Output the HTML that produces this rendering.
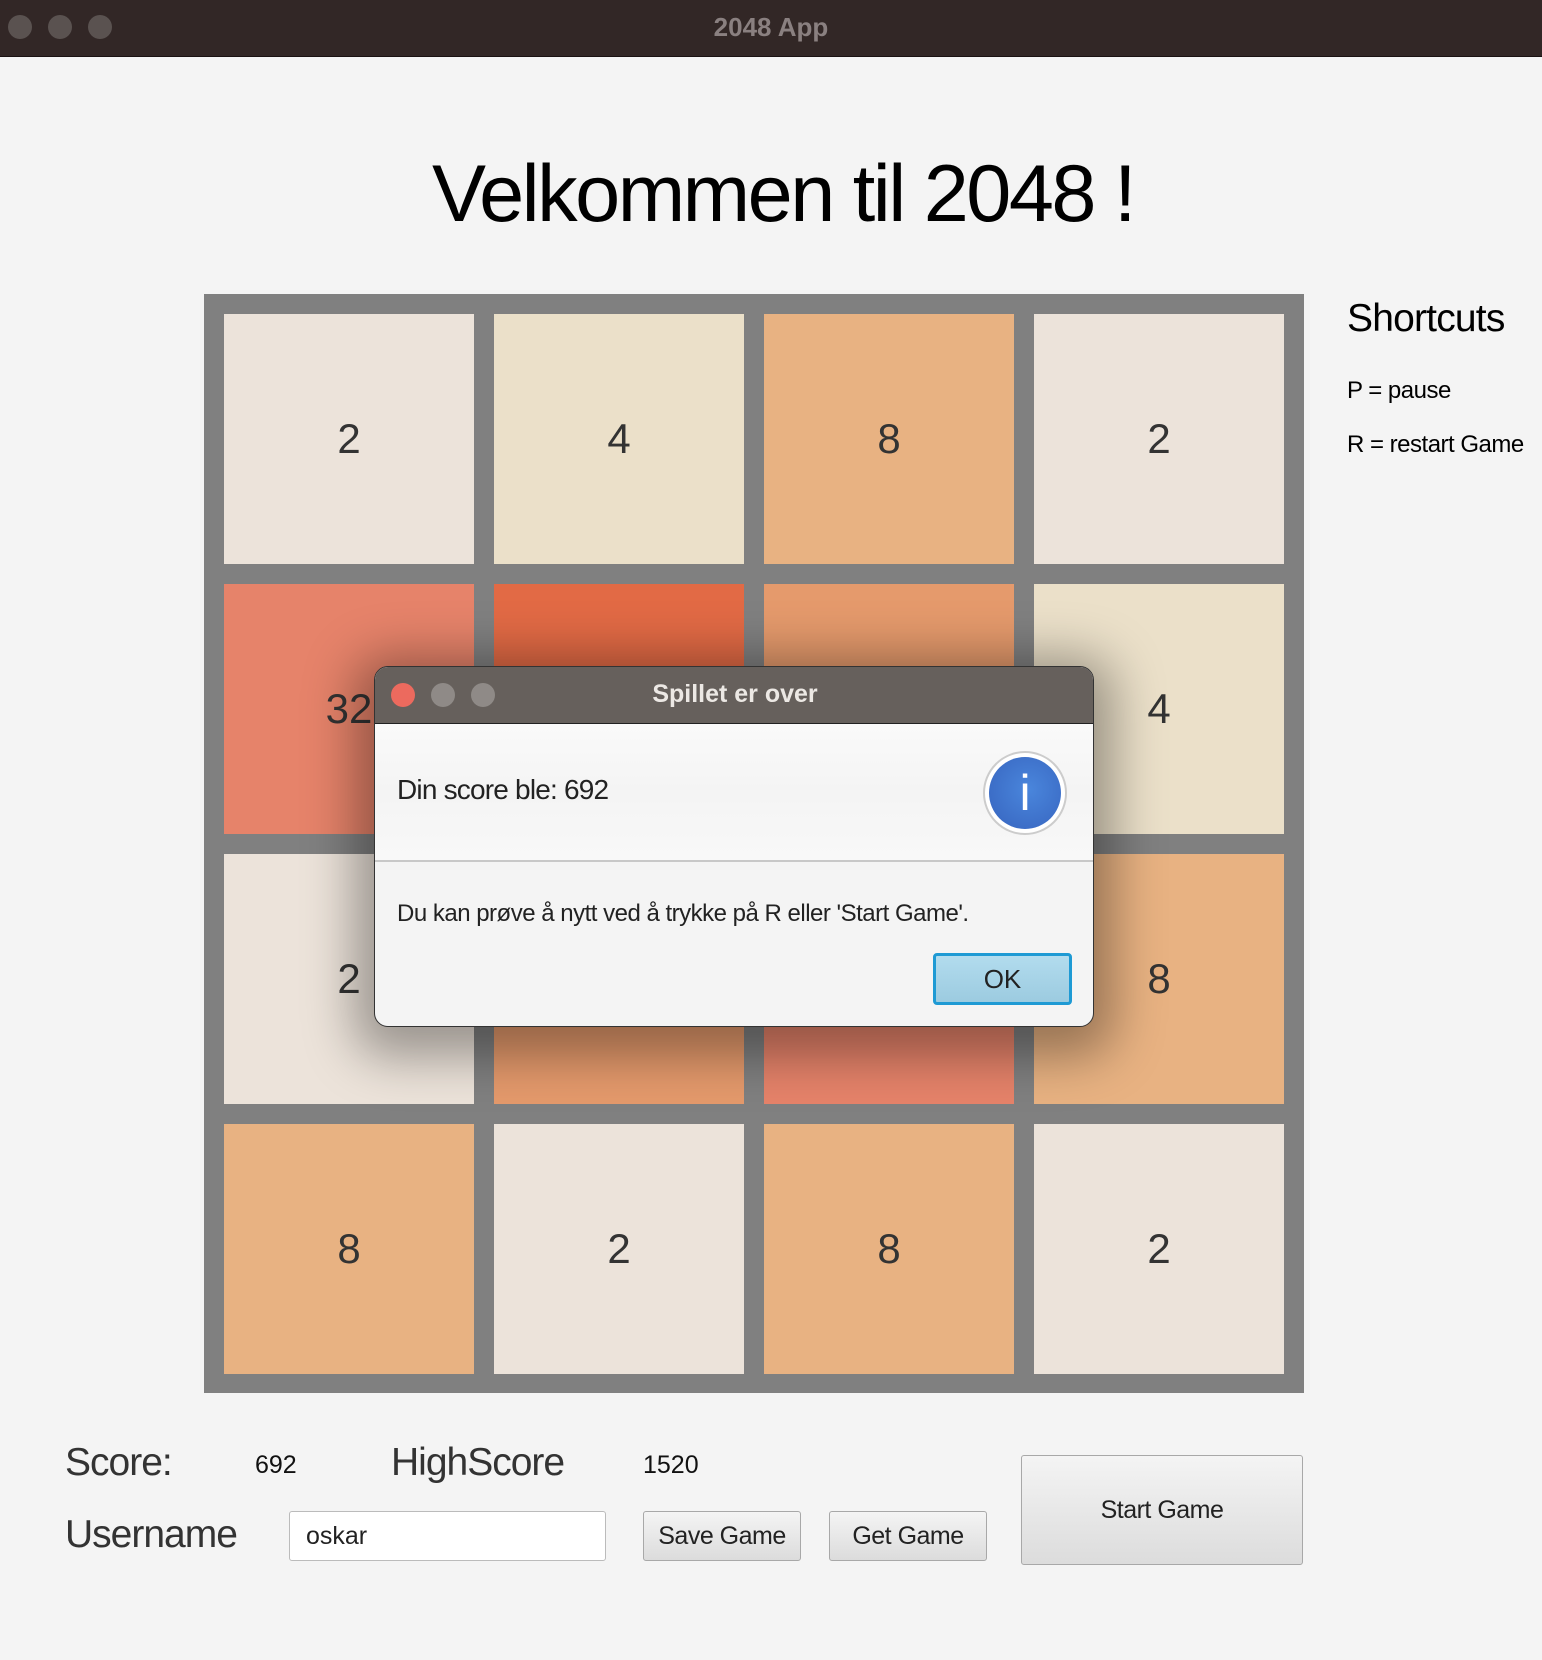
<!DOCTYPE html>
<html><head><meta charset="utf-8"><style>
*{margin:0;padding:0;box-sizing:border-box}
body{width:1542px;height:1660px;background:#f4f4f4;font-family:"Liberation Sans",sans-serif;position:relative;overflow:hidden;color:#1a1a1a}
.abs{position:absolute}
.tb{left:0;top:0;width:1542px;height:57px;background:#322726;border-bottom:1px solid #1a1212}
.dot{width:24px;height:24px;border-radius:50%;background:#5a5250;top:15px}
.tbt{left:0;width:1542px;top:12px;text-align:center;color:#8a8080;font-weight:bold;font-size:26px}
.h1{left:0;width:1566px;text-align:center;top:148px;font-size:81px;letter-spacing:-2.5px;color:#000}
.board{left:204px;top:294px;width:1100px;height:1099px;background:#808080}
.t{position:absolute;width:250px;height:250px;display:flex;align-items:center;justify-content:center;font-size:42px;color:#333}
.sc{left:1347px;font-size:24px;color:#000;letter-spacing:-0.5px}
.dlg{left:374px;top:666px;width:720px;height:361px;border-radius:14px;background:#f4f4f4;border:1px solid #333;overflow:hidden;box-shadow:0 10px 50px 20px rgba(0,0,0,0.35)}
.btn{border:1px solid #a8a8a8;background:linear-gradient(#f4f4f4,#dcdcdc);border-radius:3px;display:flex;align-items:center;justify-content:center;font-size:25px;color:#222;letter-spacing:-0.5px}
.lbl{font-size:39px;color:#333;letter-spacing:-1px}
</style></head><body>
<div class="abs tb"></div>
<div class="abs dot" style="left:8px"></div>
<div class="abs dot" style="left:48px"></div>
<div class="abs dot" style="left:88px"></div>
<div class="abs tbt">2048 App</div>
<div class="abs h1">Velkommen til 2048 !</div>
<div class="abs board">
<div class="t" style="left:20px;top:20px;background:#ece3da">2</div>
<div class="t" style="left:290px;top:20px;background:#ebe0c9">4</div>
<div class="t" style="left:560px;top:20px;background:#e8b282">8</div>
<div class="t" style="left:830px;top:20px;background:#ece3da">2</div>
<div class="t" style="left:20px;top:290px;background:#e6836a">32</div>
<div class="t" style="left:290px;top:290px;background:#e26a45">64</div>
<div class="t" style="left:560px;top:290px;background:#e59a6c">16</div>
<div class="t" style="left:830px;top:290px;background:#ebe0c9">4</div>
<div class="t" style="left:20px;top:560px;background:#ece3da">2</div>
<div class="t" style="left:290px;top:560px;background:#e59a6c">16</div>
<div class="t" style="left:560px;top:560px;background:#e6836a">32</div>
<div class="t" style="left:830px;top:560px;background:#e8b282">8</div>
<div class="t" style="left:20px;top:830px;background:#e8b282">8</div>
<div class="t" style="left:290px;top:830px;background:#ece3da">2</div>
<div class="t" style="left:560px;top:830px;background:#e8b282">8</div>
<div class="t" style="left:830px;top:830px;background:#ece3da">2</div>
</div>
<div class="abs sc" style="top:297px;font-size:39px;letter-spacing:-0.8px">Shortcuts</div>
<div class="abs sc" style="top:377px">P = pause</div>
<div class="abs sc" style="top:431px">R = restart Game</div>

<div class="abs dlg">
 <div style="position:absolute;left:0;top:0;width:720px;height:57px;background:#66605c;border-bottom:1px solid #222"></div>
 <div style="position:absolute;left:16px;top:16px;width:24px;height:24px;border-radius:50%;background:#ec6a5e"></div>
 <div style="position:absolute;left:56px;top:16px;width:24px;height:24px;border-radius:50%;background:#8f8a87"></div>
 <div style="position:absolute;left:96px;top:16px;width:24px;height:24px;border-radius:50%;background:#8f8a87"></div>
 <div style="position:absolute;left:0;width:720px;top:13px;text-align:center;color:#ece8e4;font-weight:bold;font-size:25px">Spillet er over</div>
 <div style="position:absolute;left:0;top:57px;width:720px;height:138px;background:linear-gradient(#fafafa,#f4f4f4 50%,#f8f8f8);border-bottom:2px solid #c8c8c8"></div>
 <div style="position:absolute;left:22px;top:107px;font-size:28px;color:#222;letter-spacing:-0.8px">Din score ble: 692</div>
 <div style="position:absolute;left:608px;top:84px;width:84px;height:84px;border-radius:50%;background:#fff;border:2px solid #ccc"></div>
 <div style="position:absolute;left:614px;top:90px;width:72px;height:72px;border-radius:50%;background:radial-gradient(circle at 55% 45%,#4a86dc,#3663be);color:#fff;font-size:50px;text-align:center;line-height:72px">i</div>
 <div style="position:absolute;left:22px;top:233px;font-size:24px;color:#222;letter-spacing:-0.5px">Du kan prøve å nytt ved å trykke på R eller 'Start Game'.</div>
 <div style="position:absolute;left:558px;top:286px;width:139px;height:52px;border:3px solid #1e9ad4;border-radius:4px;background:linear-gradient(#b2dcee,#9ccbe0);font-size:26px;color:#222;display:flex;align-items:center;justify-content:center">OK</div>
</div>

<div class="abs lbl" style="left:65px;top:1441px">Score:</div>
<div class="abs" style="left:255px;top:1451px;font-size:25px;color:#111">692</div>
<div class="abs lbl" style="left:391px;top:1441px">HighScore</div>
<div class="abs" style="left:643px;top:1451px;font-size:25px;color:#111">1520</div>
<div class="abs lbl" style="left:65px;top:1513px">Username</div>
<div class="abs" style="left:289px;top:1511px;width:317px;height:50px;background:#fff;border:1px solid #bbb;border-radius:3px;font-size:25px;padding:10px 16px;color:#222">oskar</div>
<div class="abs btn" style="left:643px;top:1511px;width:158px;height:50px">Save Game</div>
<div class="abs btn" style="left:829px;top:1511px;width:158px;height:50px">Get Game</div>
<div class="abs btn" style="left:1021px;top:1455px;width:282px;height:110px">Start Game</div>
</body></html>
